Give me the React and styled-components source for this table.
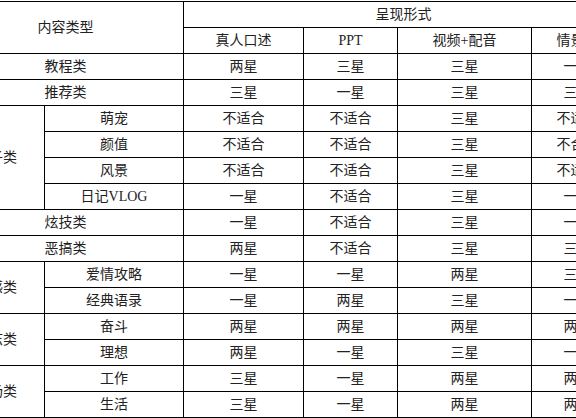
import React from "react";
import styled, { createGlobalStyle } from "styled-components";

const Global = createGlobalStyle`
  html, body { margin: 0; padding: 0; background: #fff; overflow: hidden; }
  body { width: 576px; height: 418px; }
`;

const Table = styled.table`
  border-collapse: collapse;
  table-layout: fixed;
  width: 676px;
  margin: 1px 0 0 -53px;
  font-family: "Liberation Serif", "Noto Sans CJK SC", serif;
  font-size: 14px;
  color: #222;
`;

const Row = styled.tr`
  height: 26px;
`;

const Cell = styled.td`
  border: 1px solid #000;
  padding: 0;
  text-align: center;
  vertical-align: middle;
  line-height: 20px;
  white-space: nowrap;
  overflow: hidden;
`;

const HeadCell = styled(Cell).attrs({ as: "th" })`
  font-weight: normal;
`;

const widths = [97, 139, 120, 94, 134, 92];

const rows = [
  { cat: "教程类", vals: ["两星", "三星", "三星", "一星"] },
  { cat: "推荐类", vals: ["三星", "一星", "三星", "三星"] },
  { group: "段子类", span: 4, sub: "萌宠", vals: ["不适合", "不适合", "三星", "不适合"] },
  { sub: "颜值", vals: ["不适合", "不适合", "三星", "不合适"] },
  { sub: "风景", vals: ["不适合", "不适合", "三星", "不适合"] },
  { sub: "日记VLOG", vals: ["一星", "不适合", "三星", "一星"] },
  { cat: "炫技类", vals: ["一星", "不适合", "三星", "一星"] },
  { cat: "恶搞类", vals: ["两星", "不适合", "三星", "三星"] },
  { group: "情感类", span: 2, sub: "爱情攻略", vals: ["一星", "一星", "两星", "三星"] },
  { sub: "经典语录", vals: ["一星", "两星", "三星", "一星"] },
  { group: "励志类", span: 2, sub: "奋斗", vals: ["两星", "两星", "两星", "两星"] },
  { sub: "理想", vals: ["两星", "一星", "三星", "一星"] },
  { group: "职场类", span: 2, sub: "工作", vals: ["三星", "一星", "两星", "两星"] },
  { sub: "生活", vals: ["三星", "一星", "两星", "两星"] },
];

export default function App() {
  return (
    <>
      <Global />
      <Table>
        <colgroup>
          {widths.map((w, i) => (
            <col key={i} style={{ width: w }} />
          ))}
        </colgroup>
        <thead>
          <Row>
            <HeadCell rowSpan={2} colSpan={2}>内容类型</HeadCell>
            <HeadCell colSpan={4}>呈现形式</HeadCell>
          </Row>
          <Row>
            <HeadCell>真人口述</HeadCell>
            <HeadCell>PPT</HeadCell>
            <HeadCell>视频+配音</HeadCell>
            <HeadCell>情景剧</HeadCell>
          </Row>
        </thead>
        <tbody>
          {rows.map((r, i) => (
            <Row key={i}>
              {r.cat && <Cell colSpan={2}>{r.cat}</Cell>}
              {r.group && <Cell rowSpan={r.span}>{r.group}</Cell>}
              {r.sub && <Cell>{r.sub}</Cell>}
              {r.vals.map((v, j) => (
                <Cell key={j}>{v}</Cell>
              ))}
            </Row>
          ))}
        </tbody>
      </Table>
    </>
  );
}
